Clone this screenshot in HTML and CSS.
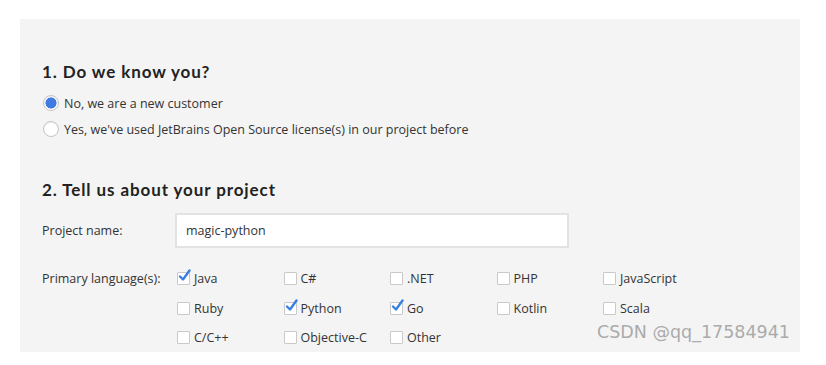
FILE: index.html
```html
<!DOCTYPE html>
<html lang="en">
<head>
  <meta charset="UTF-8" />
  <title>Open Source License Request</title>
  <link rel="stylesheet" href="styles.css">
</head>
<body>
  <form class="panel">
    <h2 class="step">1.&nbsp;Do we know you?</h2>
    <label class="radio-row">
      <span class="radio checked"></span>
      <span>No, we are a new customer</span>
    </label>
    <label class="radio-row">
      <span class="radio"></span>
      <span>Yes, we've used JetBrains Open Source license(s) in our project before</span>
    </label>

    <h2 class="step step-two">2. Tell us about your project</h2>
    <div class="field">
      <span class="field-label">Project name:</span>
      <div class="text-input">magic-python</div>
    </div>
    <div class="field field-langs">
      <span class="field-label">Primary language(s):</span>
      <div class="langs">
        <label class="lang"><span class="box checked"><svg viewBox="0 0 14 14"><path d="M3 7.5 L6 10.5 L12.5 1.5"/></svg></span>Java</label>
        <label class="lang"><span class="box"></span>C#</label>
        <label class="lang"><span class="box"></span>.NET</label>
        <label class="lang"><span class="box"></span>PHP</label>
        <label class="lang"><span class="box"></span>JavaScript</label>
        <label class="lang"><span class="box"></span>Ruby</label>
        <label class="lang"><span class="box checked"><svg viewBox="0 0 14 14"><path d="M3 7.5 L6 10.5 L12.5 1.5"/></svg></span>Python</label>
        <label class="lang"><span class="box checked"><svg viewBox="0 0 14 14"><path d="M3 7.5 L6 10.5 L12.5 1.5"/></svg></span>Go</label>
        <label class="lang"><span class="box"></span>Kotlin</label>
        <label class="lang"><span class="box"></span>Scala</label>
        <label class="lang"><span class="box"></span>C/C++</label>
        <label class="lang"><span class="box"></span>Objective-C</label>
        <label class="lang"><span class="box"></span>Other</label>
      </div>
    </div>
    <div class="watermark">CSDN @qq_17584941</div>
  </form>
</body>
</html>
```

FILE: styles.css
```css
* { box-sizing: border-box; margin: 0; padding: 0; }
body {
  background: #fff;
  font-family: 'Open Sans', sans-serif;
  font-size: 12.5px;
  color: #333;
}
.panel {
  position: relative;
  margin: 19px 0 0 20px;
  width: 780px;
  height: 333px;
  background: #f4f4f4;
  padding: 43px 0 0 22px;
  overflow: hidden;
}
.step {
  font-family: 'Lato', sans-serif;
  font-weight: 700;
  font-size: 17px;
  line-height: 20px;
  letter-spacing: 0.9px;
  color: #222;
  margin-bottom: 8px;
}
.step-two { margin-top: 38px; margin-bottom: 13px; }
.radio-row {
  display: flex;
  align-items: center;
  gap: 5px;
  height: 26px;
}
.radio {
  width: 16px;
  height: 16px;
  margin-left: 1px;
  border-radius: 50%;
  border: 1px solid #c4c4c4;
  background: #fff;
  box-shadow: inset 0 1px 1px rgba(0,0,0,0.08);
}
.radio.checked {
  background: radial-gradient(circle, #3f7be0 0 5.3px, #fff 5.8px);
}
.field {
  display: flex;
  align-items: center;
}
.field-label { width: 133px; flex: none; }
.text-input {
  width: 394px;
  height: 35px;
  background: #fff;
  border: 2px solid #e3e3e3;
  padding: 0 9px;
  line-height: 31px;
}
.field-langs {
  align-items: flex-start;
  margin-top: 16px;
}
.field-langs .field-label { line-height: 29.5px; }
.langs {
  display: grid;
  grid-template-columns: repeat(5, 106.5px);
  grid-auto-rows: 29.5px;
}
.lang {
  display: flex;
  align-items: center;
  gap: 4px;
  padding-left: 2px;
}
.box {
  position: relative;
  width: 13px;
  height: 13px;
  border: 1px solid #c9c9c9;
  background: #fff;
  border-radius: 1px;
}
.box svg {
  position: absolute;
  left: -1px;
  top: -4px;
  width: 14px;
  height: 14px;
  fill: none;
  stroke: #3a7ee2;
  stroke-width: 2.4;
  stroke-linecap: round;
  stroke-linejoin: round;
}
.watermark {
  position: absolute;
  right: 10px;
  bottom: 10px;
  font-family: 'DejaVu Sans', sans-serif;
  font-size: 17.5px;
  color: #ababab;
}
```
